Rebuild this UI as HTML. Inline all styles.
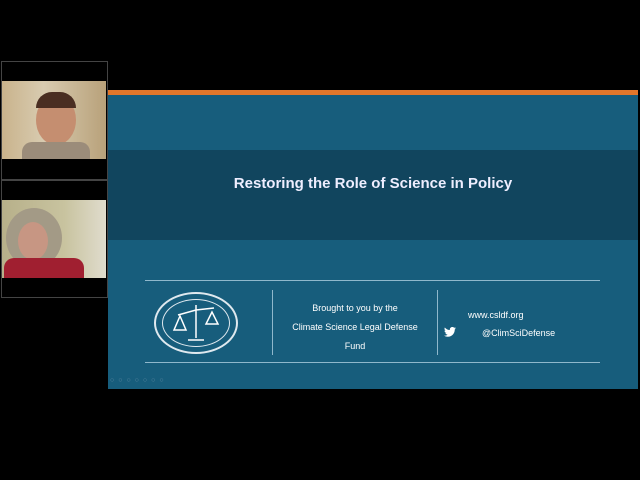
<!DOCTYPE html>
<html><head><style>
body{margin:0;width:640px;height:480px;background:#000;position:relative;overflow:hidden;font-family:"Liberation Sans",sans-serif}
div{position:absolute;box-sizing:border-box}
.t{color:#fff;font-size:9px;text-align:center}
</style></head><body>
<div style="left:1px;top:61px;width:107px;height:119px;border:1px solid #444"></div>
<div style="left:2px;top:81px;width:104px;height:78px;background:linear-gradient(90deg,#c9b38c,#d8cbb0 40%,#b8a17a);"></div>
<div style="left:36px;top:95px;width:40px;height:50px;border-radius:50%;background:#c58e70"></div>
<div style="left:36px;top:92px;width:40px;height:16px;border-radius:20px 20px 0 0;background:#4a2e22"></div>
<div style="left:22px;top:142px;width:68px;height:17px;border-radius:10px 10px 0 0;background:#9b8c7a"></div>
<div style="left:1px;top:180px;width:107px;height:118px;border:1px solid #444"></div>
<div style="left:2px;top:200px;width:104px;height:78px;background:linear-gradient(90deg,#b7b08a,#c8c39f 60%,#e0dccd);"></div>
<div style="left:6px;top:208px;width:56px;height:60px;border-radius:50%;background:#a39a86"></div>
<div style="left:18px;top:222px;width:30px;height:38px;border-radius:50%;background:#c79683"></div>
<div style="left:4px;top:258px;width:80px;height:20px;border-radius:10px 10px 0 0;background:#a01f30"></div>
<div style="left:108px;top:90px;width:530px;height:5px;background:#e2762a"></div>
<div style="left:108px;top:95px;width:530px;height:294px;background:#175d7c"></div>
<div style="left:108px;top:150px;width:530px;height:90px;background:#11455e"></div>
<div class="t" style="left:108px;top:175px;width:530px;font-size:15px;font-weight:bold;color:#eef">Restoring the Role of Science in Policy</div>
<div style="left:145px;top:280px;width:455px;height:1px;background:#8fb8cc"></div>
<div style="left:145px;top:362px;width:455px;height:1px;background:#8fb8cc"></div>
<div style="left:272px;top:290px;width:1px;height:65px;background:#8fb8cc"></div>
<div style="left:437px;top:290px;width:1px;height:65px;background:#8fb8cc"></div>
<div style="left:154px;top:292px;width:84px;height:62px;border:2px solid #dfe9ef;border-radius:50%"></div>
<div style="left:162px;top:299px;width:68px;height:48px;border:1px solid #dfe9ef;border-radius:50%"></div>
<svg style="position:absolute;left:170px;top:300px" width="52" height="45" fill="none" stroke="#fff" stroke-width="1.5"><path d="M26 5V38M18 40H34M8 15L26 10L44 8M10 16L4 30H16ZM42 12L36 24H48Z"/></svg>
<div class="t" style="left:273px;top:299px;width:164px;line-height:19px">Brought to you by the<br>Climate Science Legal Defense<br>Fund</div>
<div class="t" style="left:468px;top:310px;text-align:left">www.csldf.org</div>
<svg style="position:absolute;left:444px;top:327px" width="12" height="10" viewBox="0 0 24 20"><path fill="#fff" d="M24 2.4a10 10 0 0 1-2.8.8A5 5 0 0 0 23.3.4a10 10 0 0 1-3.1 1.2A4.9 4.9 0 0 0 11.8 6 14 14 0 0 1 1.7.9a4.9 4.9 0 0 0 1.5 6.6A5 5 0 0 1 1 6.9a4.9 4.9 0 0 0 3.9 4.8 5 5 0 0 1-2.2.1 4.9 4.9 0 0 0 4.6 3.4A9.9 9.9 0 0 1 0 17.3 14 14 0 0 0 7.5 19.5c9.1 0 14-7.5 14-14v-.6A10 10 0 0 0 24 2.4z"/></svg>
<div class="t" style="left:482px;top:328px;text-align:left">@ClimSciDefense</div>
<div style="left:110px;top:377px;width:90px;height:8px;color:#5c88a0;font-size:7px;letter-spacing:4px">○○○○○○○</div>
</body></html>
